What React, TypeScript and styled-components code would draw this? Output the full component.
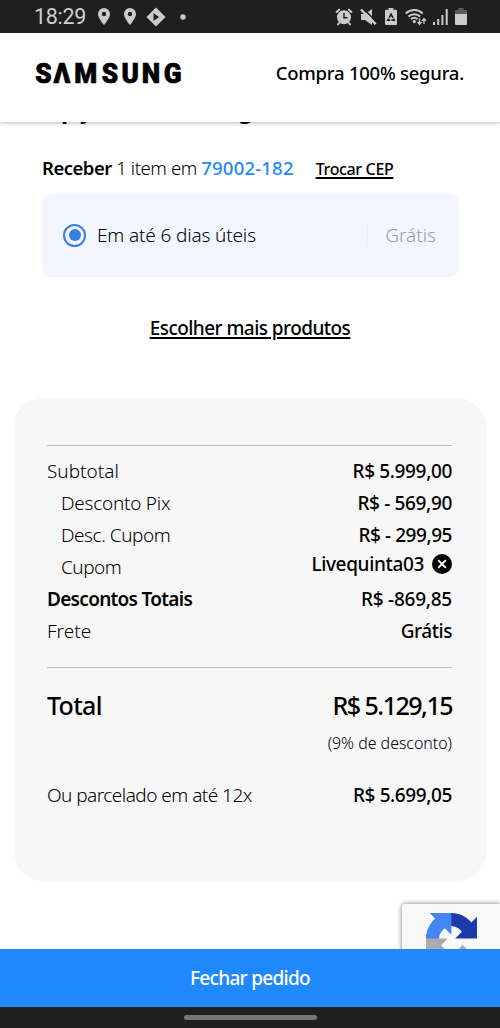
import React from 'react';
import styled, { createGlobalStyle } from 'styled-components';

const GlobalStyle = createGlobalStyle`
  * { box-sizing: border-box; }
  body { margin: 0; background: #fff; }
`;

const Screen = styled.div`
  width: 500px;
  height: 1028px;
  display: flex;
  flex-direction: column;
  overflow: hidden;
  background: #fff;
  color: #000;
  font-family: 'Noto Sans', 'Open Sans', sans-serif;
`;

const StatusBar = styled.div`
  position: relative;
  z-index: 2;
  flex: none;
  height: 33px;
  padding: 0 33px 0 34px;
  display: flex;
  align-items: center;
  justify-content: space-between;
  background: #1f1f1f;
  color: #cfcfcf;
`;

const StatusIcons = styled.div`
  display: flex;
  align-items: center;
  svg { display: block; }
`;

const Clock = styled.span`
  width: 62px;
  font: 400 21.5px/33px Roboto, sans-serif;
  letter-spacing: -0.3px;
`;

const Gap = styled.span<{ $w: number }>`
  width: ${p => p.$w}px;
`;

const Header = styled.header`
  position: relative;
  z-index: 1;
  flex: none;
  height: 89px;
  padding: 0 36px 9px 35px;
  display: flex;
  align-items: center;
  justify-content: space-between;
  background: #fff;
  box-shadow: 0 1px 4px rgba(0, 0, 0, 0.28);
`;

const Text = styled.span<{ $size?: number; $weight?: number; $track?: number; $color?: string }>`
  font-size: ${p => p.$size ?? 19}px;
  font-weight: ${p => p.$weight ?? 340};
  letter-spacing: ${p => p.$track ?? 0}px;
  color: ${p => p.$color ?? '#000'};
  line-height: 32px;
  white-space: pre;
`;

const Main = styled.main`
  flex: 1;
  min-height: 0;
  display: flex;
  flex-direction: column;
  > * { flex-shrink: 0; }
`;

const SectionTitle = styled.h2`
  margin: -29px 42px 0;
  height: 32px;
  font-size: 24px;
  font-weight: 700;
  letter-spacing: 0.1px;
  line-height: 32px;
  white-space: nowrap;
`;

const DeliveryLine = styled.div`
  height: 32px;
  margin: 27px 42px 0;
  display: flex;
  align-items: baseline;
`;

const LinkText = styled(Text)`
  text-decoration: underline;
  text-decoration-thickness: 1.5px;
  text-underline-offset: 2px;
`;

const Option = styled.label`
  height: 83px;
  margin: 10px 41px 0 42px;
  padding: 0 23px 1px 21px;
  display: flex;
  align-items: center;
  border-radius: 9px;
  background: #f3f6fe;
`;

const Radio = styled.span`
  width: 23px;
  height: 23px;
  margin-right: 11px;
  display: flex;
  align-items: center;
  justify-content: center;
  border: 2px solid #3480e0;
  border-radius: 50%;
  &::after {
    content: '';
    width: 12px;
    height: 12px;
    border-radius: 50%;
    background: #3480e0;
  }
`;

const Price = styled.span`
  height: 24px;
  margin-left: auto;
  padding-left: 17px;
  display: flex;
  align-items: center;
  border-left: 1px solid #eef1fa;
`;

const MoreProducts = styled.div`
  margin-top: 35px;
  height: 32px;
  display: flex;
  justify-content: center;
`;

const Summary = styled.section`
  height: 483px;
  margin: 54px 14px 0;
  padding: 47px 34px 0 33px;
  border-radius: 29px;
  background: #f7f7f7;
`;

const Divider = styled.hr`
  height: 1px;
  margin: 0;
  border: 0;
  background: #c3c3c3;
`;

const Rows = styled.div`
  padding: 9px 0 20px;
`;

const Row = styled.div<{ $indent?: boolean; $top?: number }>`
  height: 32px;
  margin-top: ${p => p.$top ?? 0}px;
  padding-left: ${p => (p.$indent ? 14 : 0)}px;
  display: flex;
  justify-content: space-between;
`;

const Coupon = styled.span`
  height: 26px;
  display: flex;
  align-items: center;
  gap: 8px;
`;

const Note = styled.div`
  height: 32px;
  margin-top: 6px;
  text-align: right;
`;

const Captcha = styled.div`
  align-self: flex-end;
  width: 98px;
  height: 60px;
  margin-top: 23px;
  padding: 9px 0 0 24px;
  border-radius: 3px 0 0 0;
  background: #f9f9f9;
  box-shadow: 0 0 5px rgba(0, 0, 0, 0.55);
`;

const Checkout = styled.button`
  position: relative;
  z-index: 1;
  flex: none;
  height: 58px;
  padding: 0;
  border: 0;
  background: #2189ff;
  font-family: inherit;
`;

const NavBar = styled.div`
  position: relative;
  z-index: 1;
  flex: none;
  height: 21px;
  display: flex;
  justify-content: center;
  background: #1f1f1f;
`;

const NavHandle = styled.div`
  width: 133px;
  height: 5px;
  margin-top: 8px;
  border-radius: 3px;
  background: #757575;
`;

const ink = '#cbcbcb';

const Pin = () => (
  <svg width="12" height="17" viewBox="0 0 12 17">
    <path fill={ink} fillRule="evenodd" d="M6 0a6 6 0 0 1 6 6c0 4.3-6 11-6 11S0 10.3 0 6a6 6 0 0 1 6-6zm0 3.8a2.2 2.2 0 1 0 0 4.4 2.2 2.2 0 0 0 0-4.4z" />
  </svg>
);

const Diamond = () => (
  <svg width="20" height="20" viewBox="0 0 20 20">
    <path fill={ink} fillRule="evenodd" d="M10 .5 19.5 10 10 19.5.5 10zM7.500 6v8L13 10z" />
  </svg>
);

const Alarm = () => (
  <svg width="18" height="18" viewBox="0 0 18 18" fill="none" stroke={ink}>
    <circle cx="9" cy="9.2" r="7" fill={ink} stroke="none" />
    <path strokeWidth="2" d="M1 4.5 4.8 1.2M17 4.5l-3.8-3.3M4.4 14.5 2.5 17M13.6 14.5l1.9 2.5" />
    <path stroke="#1f1f1f" strokeWidth="1.5" d="M9 5v4.800h3.600" />
  </svg>
);

const Mute = () => (
  <svg width="17" height="18" viewBox="0 0 17 18">
    <path fill={ink} d="M1 6h4l7-5v16L5 12H1z" />
    <path stroke="#1f1f1f" strokeWidth="1.600" d="M3 .3 17 14.300" />
    <path stroke={ink} strokeWidth="2.400" d="m1 1.500 14.700 14.700" />
  </svg>
);

const Recycle = () => (
  <svg width="12" height="17" viewBox="0 0 12 17">
    <path fill={ink} d="M3.6 0h4.8v1.8H11a1 1 0 0 1 1 1V16a1 1 0 0 1-1 1H1a1 1 0 0 1-1-1V2.800a1 1 0 0 1 1-1h2.600z" />
    <path fill="none" stroke="#1f1f1f" strokeWidth="1.700" strokeDasharray="4.2 1.2" d="M6 6.200 9.200 12.200H2.800z" />
  </svg>
);

const Wifi = () => (
  <svg width="22" height="18" viewBox="0 0 22 18" fill="none" stroke={ink} strokeWidth="2">
    <path d="M.8 5.400a12.500 12.500 0 0 1 17 0M3.400 8.400a8.800 8.800 0 0 1 11.800 0M6 11.300a5 5 0 0 1 6.500-.2" />
    <circle cx="9.300" cy="13.600" r="1.600" fill={ink} stroke="none" />
    <path strokeWidth="1.300" d="M14.500 10.500v5.500M12.500 14l2 2.200 2-2.200M19 16v-5M17 12.800l2-2.200 2 2.200" />
  </svg>
);

const Signal = () => (
  <svg width="15" height="16" viewBox="0 0 15 16" fill={ink}>
    <path d="M0 13h2v3H0zM4.200 10h2v6h-2zM8.400 6h2v10h-2zM12.700 0h2v16h-2z" />
  </svg>
);

const Battery = () => (
  <svg width="12" height="17" viewBox="0 0 12 17">
    <path fill="#5b5b5b" d="M3.400 0h5.200v2H12v5H0V2h3.400z" />
    <path fill={ink} d="M0 6h12v10a1 1 0 0 1-1 1H1a1 1 0 0 1-1-1z" />
  </svg>
);

const Logo = () => (
  <svg width="154" height="44" viewBox="0 0 154 44" aria-label="SAMSUNG">
    <text
      transform="scale(0.92 1)"
      x="0.200 20 42.800 72.500 94 116 140"
      y="32.300"
      fontFamily="Roboto, sans-serif"
      fontWeight="900"
      fontSize="28.500"
      stroke="#000"
      strokeWidth="0.700"
    >
      SΛMSUNG
    </text>
  </svg>
);

const RemoveIcon = () => (
  <svg width="20" height="20" viewBox="0 0 20 20">
    <circle cx="10" cy="10" r="10" />
    <path stroke="#fff" strokeWidth="1.900" d="m6.200 6.200 7.600 7.600m0-7.600-7.600 7.600" />
  </svg>
);

const RecaptchaIcon = () => (
  <svg width="51" height="51" viewBox="0 0 64 64">
    <path fill="#1c3aa9" d="M64 31.955l-.033-1.37V4.687l-7.16 7.16C50.948 4.674 42.033.093 32.05.093c-10.4 0-19.622 4.96-25.458 12.64l11.736 11.86a15.55 15.55 0 0 1 4.754-5.334c2.05-1.6 4.952-2.906 8.968-2.906.485 0 .86.057 1.135.163 4.976.393 9.288 3.14 11.828 7.124l-8.307 8.307L64 31.953" />
    <path fill="#4285f4" d="M31.862.094l-1.37.033H4.594l7.16 7.16C4.58 13.147 0 22.06 0 32.046c0 10.4 4.96 19.622 12.64 25.458L24.5 45.768a15.55 15.55 0 0 1-5.334-4.754c-1.6-2.05-2.906-4.952-2.906-8.968 0-.485.057-.86.163-1.135.393-4.976 3.14-9.288 7.124-11.828l8.307 8.307L31.86.095" />
    <path fill="#ababab" d="M.001 32.045l.033 1.37v25.898l7.16-7.16c5.86 7.173 14.774 11.754 24.76 11.754 10.4 0 19.622-4.96 25.458-12.64l-11.736-11.86a15.55 15.55 0 0 1-4.754 5.334c-2.05 1.6-4.952 2.906-8.968 2.906-.485 0-.86-.057-1.135-.163-4.976-.393-9.288-3.14-11.828-7.124l8.307-8.307c-10.522.04-22.4.066-27.295-.005" />
  </svg>
);

export default function App() {
  return (
    <Screen>
      <GlobalStyle />
      <StatusBar>
        <StatusIcons>
          <Clock>18:29</Clock>
          <Gap $w={2} />
          <Pin />
          <Gap $w={14} />
          <Pin />
          <Gap $w={10} />
          <Diamond />
          <Gap $w={14} />
          <svg width="6" height="6"><circle cx="3" cy="3" r="2.700" fill={ink} /></svg>
        </StatusIcons>
        <StatusIcons>
          <Alarm />
          <Gap $w={7} />
          <Mute />
          <Gap $w={8} />
          <Recycle />
          <Gap $w={8} />
          <Wifi />
          <Gap $w={6} />
          <Signal />
          <Gap $w={7} />
          <Battery />
        </StatusIcons>
      </StatusBar>

      <Header>
        <Logo />
        <Text $weight={500} $size={18.5} $track={-0.25}>Compra 100% segura.</Text>
      </Header>

      <Main>
        <SectionTitle>Opções de entrega</SectionTitle>
        <DeliveryLine>
          <Text $weight={600} $size={18.5} $track={-0.5}>Receber</Text>
          <Text $size={18.5} $track={-0.4}> 1 item em </Text>
          <Text $weight={500} $size={18.5} $track={0.2} $color="#2189ff">79002-182</Text>
          <Gap $w={22} />
          <LinkText $weight={500} $size={16} $track={-0.35}>Trocar CEP</LinkText>
        </DeliveryLine>

        <Option>
          <Radio />
          <Text $track={-0.15}>Em até 6 dias úteis</Text>
          <Price><Text $color="#999ca3">Grátis</Text></Price>
        </Option>

        <MoreProducts>
          <LinkText $weight={550} $track={-0.55}>Escolher mais produtos</LinkText>
        </MoreProducts>

        <Summary>
          <Divider />
          <Rows>
            <Row><Text>Subtotal</Text><Text $weight={500} $track={-0.35}>R$ 5.999,00</Text></Row>
            <Row $indent><Text $track={-0.25}>Desconto Pix</Text><Text $weight={500} $track={-0.35}>R$ - 569,90</Text></Row>
            <Row $indent><Text $track={-0.45}>Desc. Cupom</Text><Text $weight={500} $track={-0.45}>R$ - 299,95</Text></Row>
            <Row $indent>
              <Text $track={-0.5}>Cupom</Text>
              <Coupon><Text $weight={500} $track={-0.35}>Livequinta03</Text><RemoveIcon /></Coupon>
            </Row>
            <Row><Text $weight={600} $track={-0.7}>Descontos Totais</Text><Text $weight={500} $track={-0.25}>R$ -869,85</Text></Row>
            <Row><Text>Frete</Text><Text $weight={500} $track={-0.45}>Grátis</Text></Row>
          </Rows>
          <Divider />
          <Row $top={21}>
            <Text $size={25} $weight={550} $track={-0.7}>Total</Text>
            <Text $size={25} $weight={500} $track={-1.5}>R$ 5.129,15</Text>
          </Row>
          <Note><Text $size={16} $track={-0.05}>(9% de desconto)</Text></Note>
          <Row $top={20}>
            <Text $track={-0.53}>Ou parcelado em até 12x</Text>
            <Text $weight={500} $track={-0.4}>R$ 5.699,05</Text>
          </Row>
        </Summary>

        <Captcha><RecaptchaIcon /></Captcha>
      </Main>

      <Checkout><Text $weight={550} $color="#fff" $track={-0.7}>Fechar pedido</Text></Checkout>
      <NavBar><NavHandle /></NavBar>
    </Screen>
  );
}
